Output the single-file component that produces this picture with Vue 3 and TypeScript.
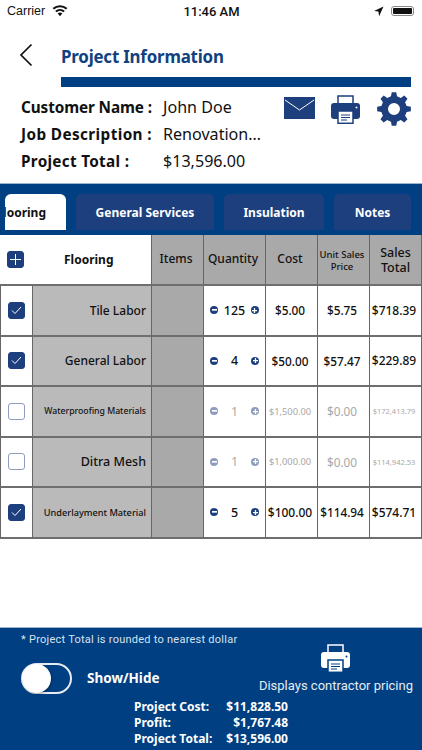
<script setup lang="ts">
interface Row { name: string; nameSize: number; qty: number; cost: string; costSize: number; unit: string; total: string; totalSize: number; on: boolean }
const rows: Row[] = [
  { name: 'Tile Labor', nameSize: 12, qty: 125, cost: '$5.00', costSize: 11.8, unit: '$5.75', total: '$718.39', totalSize: 12, on: true },
  { name: 'General Labor', nameSize: 12, qty: 4, cost: '$50.00', costSize: 11.8, unit: '$57.47', total: '$229.89', totalSize: 12, on: true },
  { name: 'Waterproofing Materials', nameSize: 8.7, qty: 1, cost: '$1,500.00', costSize: 9.3, unit: '$0.00', total: '$172,413.79', totalSize: 7.5, on: false },
  { name: 'Ditra Mesh', nameSize: 12.5, qty: 1, cost: '$1,000.00', costSize: 9.3, unit: '$0.00', total: '$114,942.53', totalSize: 7.5, on: false },
  { name: 'Underlayment Material', nameSize: 9.2, qty: 5, cost: '$100.00', costSize: 12, unit: '$114.94', total: '$574.71', totalSize: 12, on: true },
]
const tabs = ['General Services', 'Insulation', 'Notes']
const info = [
  { k: 'Customer Name :', v: 'John Doe', ls: -0.1 },
  { k: 'Job Description :', v: 'Renovation…', ls: 0.4 },
  { k: 'Project Total :', v: '$13,596.00', ls: 0.3 },
]
const totals = [
  ['Project Cost:', '$11,828.50'],
  ['Profit:', '$1,767.48'],
  ['Project Total:', '$13,596.00'],
]
function gearPath(teeth: number, outer: number, root: number, hole: number): string {
  const c = 17
  const step = (Math.PI * 2) / teeth
  const pt = (r: number, a: number) => `${(c + r * Math.cos(a)).toFixed(2)} ${(c + r * Math.sin(a)).toFixed(2)}`
  let d = ''
  for (let i = 0; i < teeth; i++) {
    const a = i * step - Math.PI / 2
    d += `${i === 0 ? 'M' : 'L'}${pt(root, a - step * 0.3)}L${pt(outer, a - step * 0.17)}L${pt(outer, a + step * 0.17)}L${pt(root, a + step * 0.3)}`
  }
  d += `ZM${c - hole} ${c}a${hole} ${hole} 0 1 0 ${hole * 2} 0a${hole} ${hole} 0 1 0 ${-hole * 2} 0Z`
  return d
}
const gear = gearPath(8, 17, 13, 6)
</script>

<template>
  <div class="screen">
    <header class="status">
      <div class="status-left">
        <span>Carrier</span>
        <svg width="16" height="12" viewBox="0 0 16 12"><path d="M8 11.2 5.7 8.6a3.4 3.4 0 0 1 4.6 0zM4.5 7.3 3.2 5.8a7.2 7.2 0 0 1 9.6 0l-1.3 1.5a5.2 5.2 0 0 0-7 0zM2 4.6.6 3.1a11 11 0 0 1 14.8 0L14 4.6a9 9 0 0 0-12 0z" fill="#111"/></svg>
      </div>
      <span class="status-time">11:46 AM</span>
      <div class="status-right">
        <svg width="11" height="11" viewBox="0 0 11 11"><path d="M10.5.5 1 5l4.4.6.7 4.6z" fill="#111"/></svg>
        <span class="battery"><i></i></span>
      </div>
    </header>

    <div class="nav">
      <svg class="back" width="14" height="24" viewBox="0 0 14 24"><path d="M12.5 1.5 2 12l10.5 10.5" fill="none" stroke="#111" stroke-width="1.7"/></svg>
      <div class="title">Project Information</div>
    </div>
    <div class="rule"></div>

    <section class="info">
      <div class="info-list">
        <div v-for="i in info" :key="i.k" class="info-row">
          <b :style="{ letterSpacing: i.ls + 'px' }">{{ i.k }}</b><span>{{ i.v }}</span>
        </div>
      </div>
      <div class="actions">
        <svg class="mail" width="31" height="22" viewBox="0 0 31 22"><rect width="31" height="22" fill="#1d3f7e"/><path d="M1 3l14.500 10L30 3" fill="none" stroke="#fff" stroke-width="1"/></svg>
        <svg class="printer" width="29" height="29" viewBox="0 0 29 29">
          <path d="M7 9V1h15v8" fill="#fff" stroke="#1d3f7e" stroke-width="1.500"/>
          <path d="M3 8h23a3 3 0 0 1 3 3v10a3 3 0 0 1-3 3H3a3 3 0 0 1-3-3V11a3 3 0 0 1 3-3z" fill="#1d3f7e"/>
          <rect x="7" y="16" width="15" height="12.300" fill="#fff" stroke="#1d3f7e" stroke-width="1.500"/>
          <path d="M10 20h9M10 22.500h9M10 25h6" stroke="#1d3f7e" stroke-width="1"/>
          <circle cx="25.500" cy="12.500" r="1" fill="#fff"/>
        </svg>
        <svg width="34" height="34" viewBox="0 0 34 34"><path :d="gear" fill="#1d3f7e" fill-rule="evenodd"/></svg>
      </div>
    </section>

    <nav class="tabs">
      <div class="tab active"><span>Flooring</span></div>
      <div v-for="(t, i) in tabs" :key="t" class="tab" :class="'t' + i">{{ t }}</div>
    </nav>

    <section class="table">
      <div class="cell head-main">
        <span class="box box-on plus">
          <svg width="11" height="11" viewBox="0 0 11 11"><path d="M5.500 0v11M0 5.500h11" stroke="#fff" stroke-width="1"/></svg>
        </span>
        <b>Flooring</b>
      </div>
      <div class="cell head">Items</div>
      <div class="cell head">Quantity</div>
      <div class="cell head">Cost</div>
      <div class="cell head small">Unit Sales<br>Price</div>
      <div class="cell head tall">Sales<br>Total</div>

      <template v-for="r in rows" :key="r.name">
        <div class="cell check">
          <span class="box" :class="{ 'box-on': r.on }">
            <svg v-if="r.on" width="11" height="9" viewBox="0 0 11 9"><path d="M1 4.500 4 7.500 10 1" fill="none" stroke="#fff" stroke-width="1"/></svg>
          </span>
        </div>
        <div class="cell name" :style="{ fontSize: r.nameSize + 'px' }">{{ r.name }}</div>
        <div class="cell items"></div>
        <div class="cell qty" :class="{ off: !r.on }">
          <span class="dot">
            <svg width="6" height="2" viewBox="0 0 6 2"><rect width="6" height="2" fill="#fff"/></svg>
          </span>
          <span class="num">{{ r.qty }}</span>
          <span class="dot">
            <svg width="6" height="6" viewBox="0 0 6 6"><path d="M3 0v6M0 3h6" stroke="#fff" stroke-width="1.500"/></svg>
          </span>
        </div>
        <div class="cell val" :class="{ off: !r.on }" :style="{ fontSize: r.costSize + 'px' }">{{ r.cost }}</div>
        <div class="cell val" :class="{ off: !r.on }">{{ r.unit }}</div>
        <div class="cell val" :class="{ off: !r.on }" :style="{ fontSize: r.totalSize + 'px' }">{{ r.total }}</div>
      </template>
    </section>

    <footer class="footer">
      <p class="note">* Project Total is rounded to nearest dollar</p>
      <div class="foot-mid">
        <div class="toggle-wrap">
          <span class="toggle"><i></i></span>
          <b>Show/Hide</b>
        </div>
        <div class="contractor">
          <svg width="29" height="29" viewBox="0 0 29 29">
            <path d="M7 9V1h15v8" fill="#003f82" stroke="#fff" stroke-width="1.500"/>
            <path d="M3 8h23a3 3 0 0 1 3 3v10a3 3 0 0 1-3 3H3a3 3 0 0 1-3-3V11a3 3 0 0 1 3-3z" fill="#fff"/>
            <rect x="7" y="16" width="15" height="12.300" fill="#fff" stroke="#003f82" stroke-width="1.500"/>
            <path d="M10 20h9M10 22.500h9M10 25h6" stroke="#003f82" stroke-width="1"/>
            <circle cx="25.500" cy="12.500" r="1" fill="#003f82"/>
          </svg>
          <span>Displays contractor pricing</span>
        </div>
      </div>
      <div class="totals">
        <div v-for="t in totals" :key="t[0]" class="total-row">
          <b>{{ t[0] }}</b><b>{{ t[1] }}</b>
        </div>
      </div>
    </footer>
  </div>
</template>

<style>
html, body { margin: 0; background: #fff; }
</style>

<style scoped>
.screen {
  width: 422px;
  height: 750px;
  display: flex;
  flex-direction: column;
  overflow: hidden;
  background: #fff;
  color: #111;
  font-family: "Noto Sans", "Open Sans", sans-serif;
}
.status {
  height: 22px;
  display: grid;
  grid-template-columns: 1fr auto 1fr;
  align-items: center;
  padding: 0 6px 0 7px;
  font: 12.500px "Liberation Sans", sans-serif;
}
.status-left { display: flex; align-items: center; gap: 7px; }
.status-time { font-weight: 500; font-family: Roboto, sans-serif; font-size: 13px; }
.status-right { display: flex; align-items: center; justify-content: flex-end; gap: 7px; }
.battery {
  width: 23px;
  height: 10px;
  border: 1px solid #888;
  border-radius: 3px;
  padding: 1px;
  box-sizing: border-box;
  display: block;
  margin-right: 2px;
}
.battery i { display: block; height: 100%; background: #111; border-radius: 1px; }
.nav {
  height: 39px;
  margin-top: 12px;
  padding-left: 19px;
  display: flex;
  align-items: center;
  gap: 28px;
}
.back { margin-top: 2px; }
.title { font-size: 16.900px; font-weight: 700; color: #11427f; letter-spacing: -0.2px; padding-top: 6px; }
.rule { height: 10px; margin: 4px 11px 0 61px; background: #003f82; }
.info {
  height: 96px;
  padding: 6px 11px 0 21px;
  box-sizing: border-box;
  display: flex;
  justify-content: space-between;
}
.info-list { display: flex; flex-direction: column; }
.info-row { height: 27px; display: flex; align-items: center; font-size: 16.100px; }
.info-row b { width: 142px; font-size: 15.300px; white-space: nowrap; }
.actions { display: flex; gap: 16px; align-items: flex-start; margin-top: -1px; }
.actions svg:last-child { margin-left: 1px; }
.mail { margin-top: 5px; }
.printer { margin-top: 3px; }
.tabs {
  height: 52px;
  background: #003f82;
  position: relative;
  border-top: 1px solid #9db5cf;
  box-sizing: border-box;
  padding: 10px 0 5px 5px;
  display: flex;
  gap: 10px;
}
.tab {
  background: #1d3f7e;
  border-radius: 5px 5px 0 0;
  color: #fff;
  font-size: 12px;
  font-weight: 700;
  display: flex;
  align-items: center;
  justify-content: center;
  white-space: nowrap;
}
.tab.active {
  width: 61px;
  background: #fff;
  color: #111;
  overflow: hidden;
  justify-content: flex-end;
  padding-right: 20px;
  box-sizing: border-box;
  border-radius: 6px 6px 0 0;
}
.t0 { width: 138px; }
.t1 { width: 100px; }
.t2 { width: 77px; }
.table {
  display: grid;
  grid-template-columns: 32px 119px 52px 62px 52px 52px 52px;
  grid-template-rows: 51px repeat(5, 50.500px);
  margin-left: 1px;
  width: 421px;
  font-size: 12px;
  font-weight: 500;
}
.cell {
  display: flex;
  align-items: center;
  justify-content: center;
  text-align: center;
  box-sizing: border-box;
  border-right: 1px solid #666;
  border-bottom: 2px solid #6e6e6e;
}
.head-main {
  grid-column: span 2;
  margin-left: -1px;
  justify-content: flex-start;
  padding-left: 7px;
  background: #fff;
  border-right: 1px solid #666;
}
.head-main b { font-size: 12px; margin-left: 40px; }
.head { background: #a9a9a9; font-size: 12px; line-height: 14.500px; font-weight: 500; padding-right: 3px; }
.head.small { font-size: 9.500px; line-height: 12px; padding-top: 3px; }
.head.tall { font-size: 12.500px; padding: 2px 0 0 0; }
.check { background: #fff; border-left: 1px solid #666; margin-left: -1px; }
.name {
  background: #bababa;
  justify-content: flex-end;
  padding-right: 5px;
  white-space: nowrap;
  font-weight: 500;
}
.items { background: #a9a9a9; }
.box {
  width: 17px;
  height: 17px;
  border: 1px solid #8e9dbd;
  border-radius: 3px;
  box-sizing: border-box;
  display: flex;
  align-items: center;
  justify-content: center;
  background: #fff;
  flex: none;
}
.box-on { background: #1d3f7e; border-color: #1d3f7e; }
.qty { justify-content: space-between; padding: 0 6px; font-weight: 500; font-size: 12.500px; }
.dot {
  width: 8px;
  height: 8px;
  border-radius: 50%;
  background: #1d3f7e;
  display: flex;
  align-items: center;
  justify-content: center;
  flex: none;
}
.dot svg { width: 5px; height: auto; }
.val { white-space: nowrap; font-weight: 500; font-size: 11.800px; padding-right: 3px; }
.off { color: #a8a8a8; font-weight: 400; }
.off .dot { background: #8e9dbd; }
.footer {
  margin-top: auto;
  height: 123px;
  background: #003f82;
  color: #fff;
  padding: 5px 9px 0 21px;
  box-sizing: border-box;
  position: relative;
  border-top: 1px solid #9db5cf;
}
.note { margin: 0; font: 11px/13px Roboto, sans-serif; color: #d8e2ee; letter-spacing: 0.25px; }
.foot-mid { display: flex; justify-content: space-between; height: 57px; }
.toggle-wrap { display: flex; align-items: center; gap: 15px; height: 50px; margin-top: 7px; }
.toggle-wrap b { font-size: 13.500px; }
.toggle {
  width: 51px;
  height: 31px;
  border: 2px solid #e6ecf3;
  border-radius: 16px;
  box-sizing: border-box;
  display: block;
}
.toggle i {
  display: block;
  width: 29px;
  height: 29px;
  margin: -1px 0 0 -1px;
  border-radius: 50%;
  background: #fff;
  box-shadow: 1px 1px 2px rgba(0, 0, 0, 0.3);
}
.contractor {
  display: flex;
  flex-direction: column;
  align-items: center;
  gap: 5px;
  margin-top: -2px;
  font: 13px Roboto, sans-serif;
  color: #e6ecf3;
}
.totals { margin: -4px 0 0 113px; width: 154px; font-size: 12px; }
.total-row { display: flex; justify-content: space-between; height: 16px; line-height: 16px; }
</style>
